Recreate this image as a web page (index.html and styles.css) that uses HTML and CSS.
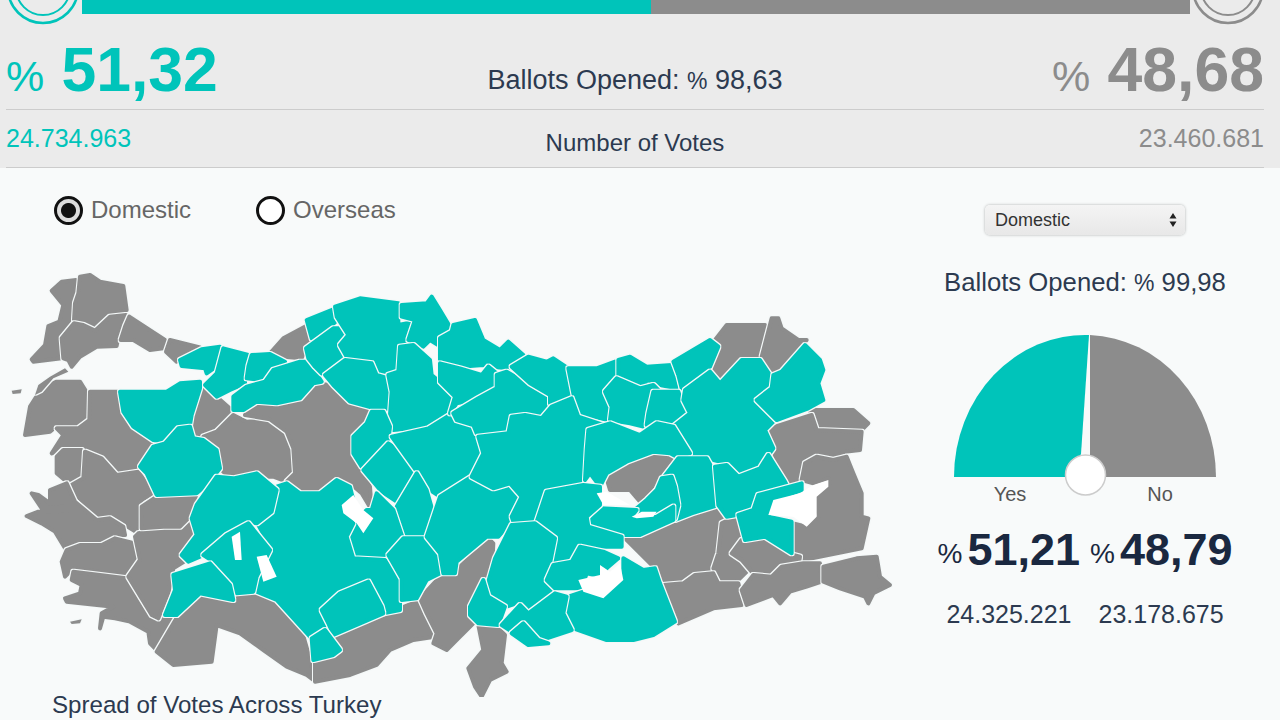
FILE: index.html
```html
<!DOCTYPE html>
<html lang="en">
<head>
    <meta charset="UTF-8">
    <title>Election Results</title>
    <link rel="stylesheet" href="styles.css">
</head>
<body>
    <div class="summary">
        <div class="bar-row">
            <svg class="ring" viewBox="0 0 82 25"><circle cx="43" cy="-12" r="35" class="ring-yes"/><circle cx="43" cy="-12" r="27" class="ring-yes thin"/></svg>
            <div class="bar"><div class="bar-yes" style="width: 51.32%"></div><div class="bar-no"></div></div>
            <svg class="ring" viewBox="0 0 90 25"><circle cx="38" cy="-12" r="35" class="ring-no"/><circle cx="38" cy="-12" r="27" class="ring-no thin"/></svg>
        </div>
        <div class="score-row">
            <div class="score yes"><span class="pct">%</span> <b>51,32</b></div>
            <div class="opened">Ballots Opened: <span class="pct-small">%</span> 98,63</div>
            <div class="score no"><span class="pct">%</span> <b>48,68</b></div>
        </div>
        <div class="votes-row">
            <div class="yes">24.734.963</div>
            <div class="votes-label">Number of Votes</div>
            <div class="no">23.460.681</div>
        </div>
    </div>

    <div class="main">
        <div class="map-col">
            <div class="radios">
                <div class="radio-item"><span class="radio checked"></span>Domestic</div>
                <div class="radio-item"><span class="radio"></span>Overseas</div>
            </div>
            <svg class="map" viewBox="0 0 2700 1311">
                <defs>
                    <!-- light border round each province, the next one painted covers the shared edge -->
                    <filter id="outline" x="-50%" y="-50%" width="200%" height="200%" color-interpolation-filters="sRGB">
                        <feMorphology in="SourceAlpha" operator="dilate" radius="4" result="grown"/>
                        <feFlood flood-color="#f4f8f8"/>
                        <feComposite in2="grown" operator="in"/>
                        <feMerge><feMergeNode/><feMergeNode in="SourceGraphic"/></feMerge>
                    </filter>
                </defs>
                <g class="n">
                    <polygon points="155,92 190,135 178,185 145,198 135,255 95,298 100,305 185,295 182,235 218,185 222,130 228,60 185,65"/>
                    <polygon points="240,50 270,45 300,65 370,78 380,150 330,165 290,210 250,190 222,180 225,130 235,100"/>
                    <polygon points="222,190 250,195 285,212 330,170 378,165 355,230 350,258 290,260 240,290 215,320 205,300 190,295 185,235"/>
                    <polygon points="388,170 495,240 490,265 450,270 400,240 362,240 375,200"/>
                    <polygon points="510,240 600,262 545,295 530,305 498,275"/>
                    <polygon points="90,440 125,385 170,365 240,365 262,400 260,480 235,500 170,498 150,515 75,525"/>
                    <polygon points="270,395 360,395 370,450 400,500 455,545 420,610 415,628 350,640 310,590 250,565 190,565 155,580 190,525 170,505 235,505 268,480"/>
                    <polygon points="170,590 190,570 245,570 255,620 245,650 200,665 170,640"/>
                    <polygon points="255,575 305,595 350,645 415,635 460,700 425,720 415,820 375,795 330,770 295,775 205,680 250,655"/>
                    <polygon points="150,690 200,670 225,725 290,780 330,775 370,800 375,825 340,825 305,850 230,850 195,865 165,815 125,790 80,768 115,755 200,752 190,740 125,745 95,700 115,705 150,730"/>
                    <polygon points="200,870 240,855 305,855 345,835 405,850 415,900 380,945 300,935 220,925 195,950 185,905"/>
                    <polygon points="220,935 300,945 378,955 445,1060 465,1080 530,1065 540,1075 470,1170 450,1150 445,1115 390,1085 345,1075 310,1070 300,1105 305,1060 340,1040 200,1025 195,1015 240,1000 245,975 215,960"/>
                    <polygon points="415,820 480,810 540,795 560,780 590,820 560,900 520,925 505,1000 475,1075 455,1065 385,950 420,900 405,830"/>
                    <polygon points="425,740 470,710 585,690 590,700 570,770 540,800 490,800 425,805"/>
                    <polygon points="470,1175 535,1065 590,1010 690,1020 770,1000 830,1030 905,1110 935,1215 940,1260 920,1245 860,1220 790,1170 720,1120 650,1095 635,1205 520,1215"/>
                    <polygon points="945,1210 1005,1180 1030,1165 1000,1125 1070,1100 1150,1065 1250,1025 1280,1065 1305,1130 1240,1140 1170,1170 1130,1215 1050,1245 945,1265"/>
                    <polygon points="1260,1015 1320,950 1380,920 1440,860 1460,830 1480,850 1475,950 1420,1050 1430,1080 1375,1135 1340,1170 1300,1150 1310,1120 1280,1060"/>
                    <polygon points="1435,1095 1495,1105 1515,1125 1505,1210 1520,1235 1470,1260 1445,1310 1425,1280 1405,1225 1450,1170"/>
                    <polygon points="600,385 650,410 695,450 640,505 610,535 580,530 575,465"/>
                    <polygon points="610,530 650,515 700,465 740,485 810,480 860,515 880,570 885,640 860,665 820,650 740,650 690,655 660,625 650,570"/>
                    <polygon points="735,465 770,430 830,435 900,420 945,370 990,375 1050,430 1105,445 1100,490 1060,530 1060,585 1110,680 1115,750 1085,700 1050,670 1010,655 960,695 900,695 860,665 885,640 880,565 860,515 810,478"/>
                    <polygon points="810,280 850,235 920,197 930,235 905,295 850,290"/>
                    <polygon class="sliver" points="195,325 150,350 115,375 105,405 125,395 160,355 205,335"/>
                    <polygon class="sliver" points="35,392 65,388 62,400 38,402"/>
                    <polygon class="sliver" points="210,1085 245,1078 240,1090 215,1092"/>
                </g>
                <g transform="translate(1320 0)">
                    <g class="n">
                        <polygon points="495,640 560,600 640,575 705,585 665,635 640,675 620,710 600,725 570,690 510,690"/>
                        <polygon points="810,320 825,240 860,195 975,195 985,225 960,290 905,300 840,370"/>
                        <polygon points="965,290 995,175 1015,175 1025,205 1075,240 1100,240 1045,295 1025,335 1000,335"/>
                        <polygon points="1110,450 1240,450 1285,490 1265,510 1135,505 1115,475"/>
                        <polygon points="975,510 1115,465 1130,510 1265,515 1260,570 1215,575 1180,590 1130,590 1095,610 1080,665 1040,670 1000,575"/>
                        <polygon points="1085,660 1095,610 1130,590 1180,600 1220,590 1240,640 1265,700 1265,770 1285,775 1265,865 1090,900 1060,880 1060,790 1100,800 1135,770 1130,710 1170,670 1165,655 1120,670"/>
                        <polygon points="555,835 620,825 700,785 780,755 830,740 860,770 835,805 830,880 815,935 760,940 720,965 665,970 640,920"/>
                        <polygon points="845,790 885,770 900,830 865,880 925,930 890,965 840,965 820,925 835,880"/>
                        <polygon points="875,880 905,840 970,830 1060,885 1080,890 1075,920 1020,915 990,945 935,935 905,900"/>
                        <polygon points="670,975 730,970 765,945 820,940 835,970 895,970 905,1010 905,1035 820,1045 715,1090"/>
                        <polygon points="905,990 940,945 995,950 1025,920 1090,910 1140,910 1145,965 1100,980 1050,995 1020,1030 1000,1005 920,1035"/>
                        <polygon points="1150,920 1250,895 1310,890 1320,950 1350,975 1300,1000 1285,1030 1275,1010 1200,985 1150,965"/>
                    </g>
                </g>
                <g class="y">
                    <polygon points="360,395 470,395 500,395 540,370 600,365 600,385 575,465 570,495 535,490 495,545 460,540 400,500 370,455"/>
                    <polygon points="420,620 460,560 495,550 535,505 570,500 580,535 610,540 650,570 660,625 625,670 590,700 470,705 440,640"/>
                    <polygon points="540,300 605,268 660,260 655,315 620,340 615,325 545,318"/>
                    <polygon points="670,265 745,285 735,340 735,370 690,390 650,410 615,375 650,340"/>
                    <polygon points="755,285 810,282 855,305 815,335 790,360 740,355 745,320"/>
                    <polygon points="700,410 740,380 795,365 820,330 900,305 925,305 965,365 940,370 900,415 830,430 770,425 730,450 700,450"/>
                    <polygon points="920,180 1000,148 1012,180 975,215 935,235"/>
                    <polygon points="918,265 1000,205 1035,205 1040,235 1020,265 1030,295 965,340 945,320 925,295"/>
                    <polygon points="1005,140 1080,115 1195,130 1195,195 1245,185 1220,240 1195,285 1190,335 1130,335 1115,300 1040,290 1020,255 1045,225 1010,170"/>
                    <polygon points="1205,135 1280,130 1295,110 1320,150 1350,200 1355,240 1330,265 1290,240 1270,260 1225,240 1245,180 1205,170"/>
                    <polygon points="975,345 1035,300 1115,310 1130,345 1165,355 1175,400 1170,445 1145,450 1105,440 1050,425 1000,375"/>
                    <polygon points="1200,260 1240,255 1290,300 1295,345 1360,400 1345,440 1345,470 1290,500 1180,510 1170,465 1175,395 1165,345 1195,335"/>
                    <polygon points="1115,455 1150,455 1170,500 1165,540 1085,620 1060,580 1060,530 1100,490"/>
                    <polygon points="1090,630 1165,550 1225,590 1240,650 1190,725 1145,695"/>
                    <polygon points="1175,530 1285,505 1350,465 1420,510 1450,575 1420,630 1360,670 1320,710 1290,690 1240,620"/>
                    <polygon points="1250,640 1280,690 1300,760 1290,790 1270,830 1215,830 1190,740"/>
                    <polygon points="1130,700 1180,750 1210,840 1155,890 1060,895 1040,840 1060,790 1100,750 1115,750"/>
                    <polygon points="830,680 860,670 900,700 960,700 1010,660 1050,680 1060,720 1025,740 1060,790 1040,830 1060,895 1155,900 1200,960 1200,1050 1150,1060 1140,1015 1105,960 1020,1000 965,1060 975,1100 930,1130 830,1020 770,995 770,950 795,895 810,860 775,795 825,755 835,715"/>
                    <polygon points="590,735 650,650 700,655 770,640 830,690 815,755 770,790 745,785 680,825 600,890 565,905 545,885 590,825 575,775"/>
                    <polygon points="610,885 680,825 745,790 810,870 770,950 760,995 710,1000 685,950 640,905"/>
                    <polygon points="520,945 630,910 690,975 700,1020 600,1000 530,1065 495,1065 525,990"/>
                    <polygon points="965,1050 1020,1000 1105,965 1145,1040 1150,1060 1070,1095 1000,1125 985,1090"/>
                    <polygon points="935,1135 975,1110 1020,1170 1000,1185 940,1200"/>
                    <polygon points="1165,885 1210,835 1270,835 1325,880 1330,935 1280,960 1250,1015 1205,1020 1205,955"/>
                    <polygon points="1320,710 1415,650 1480,685 1530,675 1565,710 1535,770 1530,790 1495,830 1460,830 1370,905 1365,940 1330,940 1320,880 1280,830 1300,770"/>
                </g>
                <g transform="translate(1320 0)">
                    <g class="y">
                        <polygon points="40,195 105,180 130,240 180,270 205,245 250,285 210,325 150,320 130,315 60,320 0,300 0,235 35,215"/>
                        <polygon points="0,310 60,325 125,345 145,320 170,340 165,380 130,415 100,420 50,430 30,460 45,410 0,365"/>
                        <polygon points="40,460 115,415 170,385 170,345 200,335 270,375 325,405 325,440 305,470 250,460 205,475 195,515 110,520 100,495 50,480"/>
                        <polygon points="215,320 265,290 320,305 340,295 385,325 380,365 395,405 345,440 330,430 330,405 270,370"/>
                        <polygon points="385,325 470,325 525,305 530,345 490,395 510,435 505,480 415,460 400,400"/>
                        <polygon points="535,300 570,290 620,320 695,315 710,385 660,375 620,360 610,385 535,345"/>
                        <polygon points="700,305 810,240 835,260 810,320 725,385 715,345"/>
                        <polygon points="495,395 530,355 600,385 640,375 655,390 625,420 625,455 610,500 570,490 510,480 515,440"/>
                        <polygon points="640,395 715,395 730,440 750,455 705,490 620,495 625,460"/>
                        <polygon points="735,390 810,335 840,370 905,300 960,300 990,345 990,385 945,420 1005,480 975,510 1000,565 960,620 895,650 860,610 760,585 700,500 750,460 730,420"/>
                        <polygon points="1000,345 1025,335 1095,255 1140,300 1150,330 1135,370 1150,420 1105,445 1010,480 950,420 995,385"/>
                        <polygon points="115,530 205,520 215,470 255,465 305,475 335,440 395,415 415,470 490,495 435,510 430,580 435,660 320,690 310,750 290,780 220,785 215,770 245,710 210,670 160,685 95,650 130,580"/>
                        <polygon points="445,510 510,490 600,525 650,490 700,500 750,580 710,590 690,580 640,575 560,605 500,640 480,680 450,640 435,660 440,570"/>
                        <polygon points="715,595 800,595 825,640 825,738 755,760 705,780 715,735 705,680 695,650 665,660"/>
                        <polygon points="590,745 620,720 650,690 665,655 695,650 705,680 715,735 705,775 650,770 575,775"/>
                        <polygon points="825,620 860,615 895,650 960,625 985,585 1035,665 1040,675 950,705 930,750 890,765 860,770 835,735"/>
                        <polygon points="895,765 940,750 955,705 1085,670 1085,690 1000,720 985,770 1055,785 1055,880 975,830 915,840"/>
                        <polygon points="440,800 480,745 590,750 570,775 650,770 700,740 700,780 600,825 545,825 510,820 465,805"/>
                        <polygon points="290,785 320,695 430,675 480,680 480,735 440,770 445,800 545,830 545,860 480,860 420,855 400,885 380,905 340,905 355,850 340,830"/>
                        <polygon points="165,895 215,795 285,790 345,835 330,910 315,960 345,985 265,1055 230,1030 200,1040 150,1010 145,965"/>
                        <polygon points="320,960 340,915 395,905 420,860 490,875 535,895 500,925 490,950 440,940 425,985 345,985"/>
                        <polygon points="385,1010 430,995 490,1015 550,965 550,895 610,930 645,925 660,970 705,1085 640,1125 580,1140 500,1140 400,1105 375,1060"/>
                        <polygon points="90,1040 130,960 145,1010 195,1040 175,1095 115,1090 90,1065"/>
                        <polygon points="185,1095 240,1035 265,1060 345,1000 380,1010 370,1060 395,1110 320,1135 300,1135 250,1085 215,1115"/>
                        <polygon points="215,1120 250,1090 295,1140 325,1150 265,1155"/>
                    </g>
                </g>
                <g class="lake">
                    <polygon points="1025,735 1060,705 1090,750 1120,775 1090,820 1070,790 1030,760"/>
                    <polygon points="695,830 720,815 725,900 705,900"/>
                    <polygon points="770,890 800,885 830,950 790,965"/>
                    <polygon points="1735,960 1800,945 1800,915 1830,935 1860,910 1870,960 1810,1015 1750,995"/>
                    <polygon points="2305,765 2320,720 2400,700 2440,675 2485,660 2485,680 2450,710 2450,770 2420,800 2380,770"/>
                    <polygon points="1790,700 1820,695 1890,735 1810,735"/>
                    <polygon points="1895,770 1925,755 1970,755 1960,770 1910,775"/>
                </g>
            </svg>
            <div class="caption">Spread of Votes Across Turkey</div>
        </div>

        <div class="side-col">
            <div class="select">
                <span>Domestic</span>
                <svg width="8" height="16" viewBox="0 0 8 16"><path d="M4 1 L7.5 6.5 H0.5 Z M4 15 L0.5 9.5 H7.5 Z" fill="#222"/></svg>
            </div>
            <div class="side-opened">Ballots Opened: <span class="pct-small">%</span> 99,98</div>
            <svg class="gauge" width="300" height="172" viewBox="0 0 300 172">
                <path d="M19 143 A131 142 0 0 1 154 1 L146 120 L131 143 Z" fill="#00c4ba"/>
                <path d="M155 1 A131 142 0 0 1 281 143 H155 Z" fill="#8c8c8c"/>
                <circle cx="150.5" cy="141" r="20" fill="#fff" stroke="#ccc" stroke-width="1.5"/>
                <text x="75" y="167" class="gauge-label">Yes</text>
                <text x="225" y="167" class="gauge-label">No</text>
            </svg>
            <div class="side-scores">
                <div class="side-score"><span class="side-pct">%</span><b>51,21</b></div>
                <div class="side-score"><span class="side-pct">%</span><b>48,79</b></div>
            </div>
            <div class="side-votes">
                <div>24.325.221</div>
                <div>23.178.675</div>
            </div>
        </div>
    </div>
</body>
</html>
```

FILE: styles.css
```css
* {
    margin: 0;
    padding: 0;
    box-sizing: border-box;
    font-family: "Liberation Sans", Arial, sans-serif;
}

html, body {
    height: 720px;
    overflow: hidden;
}

body {
    background: #f8fafa;
    color: #2c3a50;
}

.yes {
    color: #00c4ba;
}

.no {
    color: #8c8c8c;
}

.summary {
    height: 168px;
    background: #ebebeb;
    padding: 0 16px 0 6px;
}

.bar-row {
    display: flex;
    height: 25px;
    margin-left: -6px;
    margin-right: -16px;
}

.ring {
    display: block;
    height: 25px;
    flex: none;
}

.ring circle {
    fill: none;
    stroke-width: 2.5;
}

.ring .thin {
    stroke-width: 2;
}

.ring-yes {
    stroke: #00c4ba;
}

.ring-no {
    stroke: #8c8c8c;
}

.bar {
    display: flex;
    flex: 1;
    height: 14px;
}

.bar-yes {
    background: #00c4ba;
}

.bar-no {
    flex: 1;
    background: #8c8c8c;
}

.score-row {
    display: flex;
    justify-content: space-between;
    align-items: center;
    height: 85px;
    border-bottom: 1px solid #ccc;
}

.score {
    font-size: 62px;
    line-height: 70px;
    margin-top: 10px;
}

.score b {
    font-size: 62.5px;
}

.pct {
    font-size: 43px;
}

.opened {
    font-size: 27px;
    margin-top: 26px;
}

.pct-small {
    font-size: 23px;
}

.votes-row {
    display: flex;
    justify-content: space-between;
    height: 58px;
    border-bottom: 1px solid #ccc;
    font-size: 25px;
    line-height: 56px;
}

.votes-label {
    padding-top: 5px;
    font-size: 24px;
}

.main {
    display: flex;
}

.map-col {
    width: 900px;
    flex: none;
}

.radios {
    display: flex;
    gap: 65px;
    height: 92px;
    padding: 27px 0 0 54px;
}

.radio-item {
    display: flex;
    align-items: center;
    gap: 8px;
    height: 30px;
    font-size: 24px;
    color: #666;
}

.radio {
    width: 29px;
    height: 29px;
    border: 3px solid #111;
    border-radius: 50%;
    background: #fff;
}

.radio.checked {
    background: radial-gradient(circle, #111 0 7px, #ddd 8px);
}

.map {
    display: block;
    width: 900px;
    height: 437px;
}

.map polygon {
    stroke-width: 12;
    stroke-linejoin: round;
    filter: url(#outline);
}

.map .n polygon {
    fill: #8c8c8c;
    stroke: #8c8c8c;
}

.map .y polygon {
    fill: #00c4ba;
    stroke: #00c4ba;
}

.map .n .sliver {
    stroke-width: 0;
}

.map .lake polygon {
    fill: #fff;
    stroke: none;
    filter: none;
}

.caption {
    padding-left: 52px;
    font-size: 24.1px;
    line-height: 30px;
    margin-top: -7px;
}

.side-col {
    width: 370px;
    flex: none;
    display: flex;
    flex-direction: column;
    align-items: center;
    padding-top: 37px;
}

.select {
    display: flex;
    justify-content: space-between;
    align-items: center;
    width: 200px;
    height: 30px;
    padding: 0 8px 0 10px;
    background: linear-gradient(#f4f4f4, #e8e8e8);
    border-radius: 5px;
    box-shadow: 0 0 3px rgba(0,0,0,0.3);
    font-size: 18px;
    color: #333;
}

.side-opened {
    margin-top: 33px;
    font-size: 25.7px;
}

.gauge {
    display: block;
    margin-top: 37px;
}

.gauge-label {
    font-size: 20px;
    fill: #555;
    text-anchor: middle;
}

.side-scores {
    display: flex;
    gap: 10px;
    margin-top: 18px;
    color: #1a2840;
}

.side-score {
    display: flex;
    align-items: center;
    gap: 5px;
    height: 52px;
}

.side-score b {
    font-size: 45px;
}

.side-pct {
    font-size: 28px;
    margin-top: 8px;
}

.side-votes {
    display: flex;
    gap: 27px;
    margin-top: 24px;
    font-size: 25px;
}
```
